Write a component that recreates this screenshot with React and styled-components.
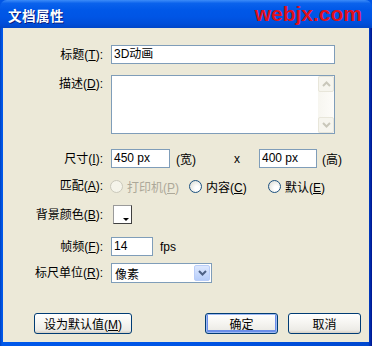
import React from "react";
import styled, { createGlobalStyle } from "styled-components";

const Global = createGlobalStyle`
  html, body {
    margin: 0;
    padding: 0;
    background: #ece9d8;
  }
  body {
    font-family: "Liberation Sans", "Noto Sans CJK SC", sans-serif;
    font-size: 12px;
    color: #000;
  }
`;

const Chevron = ({ up, color = "#4d6185" }) => (
  <svg width="9" height="6" viewBox="0 0 9 6">
    <path
      d={up ? "M1 5 L4.5 1.5 L8 5" : "M1 1 L4.5 4.5 L8 1"}
      fill="none"
      stroke={color}
      strokeWidth="2"
    />
  </svg>
);

const App = () => {
  return (
    <Window>
      <Global />
      <TitleBar>
        <Title>文档属性</Title>
        <Brand>webjx.com</Brand>
      </TitleBar>
      <Frame>
        <Body>
          <Row $mt={17} $h={19}>
            <Label>
              标题(<u>T</u>):
            </Label>
            <Input $w={224}>3D动画</Input>
          </Row>

          <Row $mt={11} $h={59} $top>
            <Label $pt={1}>
              描述(<u>D</u>):
            </Label>
            <TextArea>
              <ScrollBar>
                <ScrollBtn>
                  <Chevron up color="#c9c7ba" />
                </ScrollBtn>
                <ScrollBtn>
                  <Chevron color="#c9c7ba" />
                </ScrollBtn>
              </ScrollBar>
            </TextArea>
          </Row>

          <Row $mt={15} $h={19}>
            <Label>
              尺寸(<u>I</u>):
            </Label>
            <Input $w={59}>450 px</Input>
            <Text $ml={6}>(宽)</Text>
            <Text $ml={38}>x</Text>
            <Input $w={58} $ml={19}>
              400 px
            </Input>
            <Text $ml={5}>(高)</Text>
          </Row>

          <Row $mt={9} $h={18}>
            <Label>
              匹配(<u>A</u>):
            </Label>
            <Radio $disabled $w={79}>
              <Dot $disabled />
              <span>
                打印机(<u>P</u>)
              </span>
            </Radio>
            <Radio $w={79}>
              <Dot />
              <span>
                内容(<u>C</u>)
              </span>
            </Radio>
            <Radio>
              <Dot />
              <span>
                默认(<u>E</u>)
              </span>
            </Radio>
          </Row>

          <Row $mt={10} $h={19}>
            <Label>
              背景颜色(<u>B</u>):
            </Label>
            <Swatch>
              <SwatchArrow />
            </Swatch>
          </Row>

          <Row $mt={13} $h={19}>
            <Label>
              帧频(<u>F</u>):
            </Label>
            <Input $w={42}>14</Input>
            <Text $ml={7}>fps</Text>
          </Row>

          <Row $mt={7} $h={20}>
            <Label>
              标尺单位(<u>R</u>):
            </Label>
            <Select>
              <span>像素</span>
              <SelectBtn>
                <Chevron />
              </SelectBtn>
            </Select>
          </Row>

          <Footer>
            <Button $w={98}>
              <span>
                设为默认值(<u>M</u>)
              </span>
            </Button>
            <Spacer />
            <Button $w={73} $default>
              确定
            </Button>
            <Button $w={73}>取消</Button>
          </Footer>
        </Body>
      </Frame>
    </Window>
  );
};

export default App;

// Styling

const Window = styled.div`
  width: 372px;
  height: 346px;
  display: flex;
  flex-direction: column;
  background: #0055e5;
  overflow: hidden;
`;

const TitleBar = styled.div`
  height: 28px;
  flex-shrink: 0;
  display: flex;
  align-items: center;
  justify-content: space-between;
  padding: 1px 10px 0 8px;
  box-sizing: border-box;
  border-radius: 7px 7px 0 0;
  background: linear-gradient(
    to bottom,
    #3c8cf8 0%,
    #0a62ec 12%,
    #0058e8 35%,
    #0055e5 60%,
    #004ed9 85%,
    #0046c8 100%
  );
`;

const Title = styled.div`
  color: #fff;
  font-family: "Noto Sans CJK SC", sans-serif;
  font-weight: 700;
  font-size: 13.5px;
  letter-spacing: 0.5px;
  text-shadow: 1px 1px 0 #0a1e80;
`;

const Brand = styled.div`
  color: #e0101c;
  font-family: "Liberation Sans", Arial, sans-serif;
  font-weight: 700;
  font-size: 21px;
  margin-top: -1px;
`;

const Frame = styled.div`
  flex: 1;
  display: flex;
  padding: 0 3px 4px 3px;
  background: linear-gradient(to right, #0041c0 0, #0058ea 2px, #0055e5 50%, #0048d0 99%, #00138c 100%);
`;

const Body = styled.div`
  flex: 1;
  background: #ece9d8;
  display: flex;
  flex-direction: column;
`;

const Row = styled.div`
  display: flex;
  align-items: ${(p) => (p.$top ? "flex-start" : "center")};
  height: ${(p) => p.$h}px;
  margin-top: ${(p) => p.$mt}px;
`;

const Label = styled.div`
  width: 100px;
  margin-right: 8px;
  text-align: right;
  flex-shrink: 0;
  line-height: 16px;
  padding-top: ${(p) => p.$pt || 0}px;
  white-space: nowrap;
`;

const Input = styled.div`
  width: ${(p) => p.$w}px;
  height: 19px;
  margin-left: ${(p) => p.$ml || 0}px;
  box-sizing: border-box;
  border: 1px solid #7f9db9;
  background: #fff;
  padding: 0 2px;
  line-height: 17px;
  white-space: nowrap;
  flex-shrink: 0;
`;

const Text = styled.span`
  margin-left: ${(p) => p.$ml || 0}px;
  white-space: nowrap;
`;

const TextArea = styled.div`
  width: 224px;
  height: 59px;
  box-sizing: border-box;
  border: 1px solid #7f9db9;
  background: #fff;
  display: flex;
  justify-content: flex-end;
`;

const ScrollBar = styled.div`
  width: 16px;
  display: flex;
  flex-direction: column;
  justify-content: space-between;
  background: linear-gradient(to right, #f7f6f0, #fdfcf9);
`;

const ScrollBtn = styled.div`
  height: 16px;
  box-sizing: border-box;
  border: 1px solid #e8e6da;
  border-radius: 2px;
  background: #f6f5ee;
  display: flex;
  align-items: center;
  justify-content: center;
`;

const Radio = styled.label`
  display: flex;
  align-items: center;
  gap: 4px;
  width: ${(p) => (p.$w ? `${p.$w}px` : "auto")};
  margin-left: -1px;
  margin-right: 1px;
  color: ${(p) => (p.$disabled ? "#aca899" : "#000")};
  white-space: nowrap;
  flex-shrink: 0;
`;

const Dot = styled.span`
  width: 13px;
  height: 13px;
  flex-shrink: 0;
  box-sizing: border-box;
  border-radius: 50%;
  border: 1px solid ${(p) => (p.$disabled ? "#cac8bb" : "#1c5180")};
  background: ${(p) =>
    p.$disabled
      ? "#f5f4ea"
      : "radial-gradient(circle at 65% 65%, #ffffff 20%, #e6e6e0 70%, #cfcfc6 100%)"};
`;

const Swatch = styled.div`
  width: 19px;
  height: 19px;
  margin-left: 2px;
  box-sizing: border-box;
  border-top: 1px solid #9a9a9a;
  border-left: 1px solid #9a9a9a;
  border-right: 1px solid #404040;
  border-bottom: 1px solid #404040;
  background: #fff;
  display: flex;
  align-items: flex-end;
  justify-content: flex-end;
  padding: 0 2px 2px 0;
`;

const SwatchArrow = styled.span`
  width: 0;
  height: 0;
  border-left: 3px solid transparent;
  border-right: 3px solid transparent;
  border-top: 3px solid #000;
`;

const Select = styled.div`
  width: 101px;
  height: 20px;
  box-sizing: border-box;
  border: 1px solid #7f9db9;
  background: #fff;
  display: flex;
  align-items: center;
  justify-content: space-between;
  padding-left: 3px;
  font-family: "Noto Sans CJK SC", sans-serif;
`;

const SelectBtn = styled.div`
  width: 16px;
  height: 16px;
  margin-right: 1px;
  box-sizing: border-box;
  border: 1px solid #b9cdf8;
  border-radius: 2px;
  background: linear-gradient(to bottom, #dde8fe, #b6cdfa);
  display: flex;
  align-items: center;
  justify-content: center;
`;

const Footer = styled.div`
  display: flex;
  align-items: center;
  gap: 10px;
  margin-top: 30px;
  padding: 0 8px 0 31px;
`;

const Spacer = styled.div`
  flex: 1;
`;

const Button = styled.div`
  width: ${(p) => p.$w}px;
  height: 21px;
  box-sizing: border-box;
  border: 1px solid #003c74;
  border-radius: 3px;
  background: linear-gradient(to bottom, #ffffff 0%, #f5f4f0 50%, #ecebe6 85%, #d6d0c5 100%);
  box-shadow: ${(p) =>
    p.$default ? "inset 0 0 0 1px #9fbaf3, inset 0 -1px 0 2px #6b8ee8" : "none"};
  display: flex;
  align-items: center;
  justify-content: center;
  white-space: nowrap;
  flex-shrink: 0;
`;
